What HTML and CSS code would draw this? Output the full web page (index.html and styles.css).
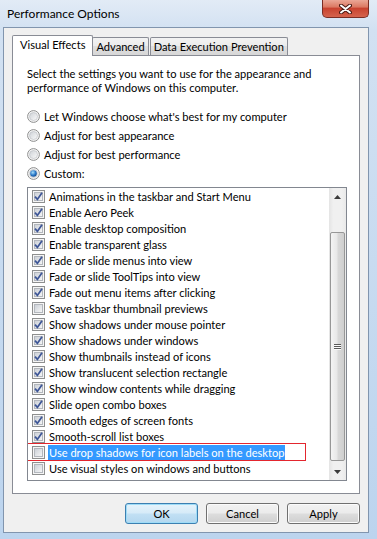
FILE: index.html
```html
<!DOCTYPE html>
<html lang="en">
<head>
<meta charset="UTF-8">
<meta name="viewport" content="width=device-width, initial-scale=1.0">
<title>Performance Options</title>
<link rel="stylesheet" href="styles.css">
</head>
<body>
<svg class="defs" width="0" height="0">
  <defs>
    <linearGradient id="boxFill" x1="0" y1="0" x2="1" y2="1">
      <stop offset="0" stop-color="#c9ced5"/>
      <stop offset="1" stop-color="#f8f8f8"/>
    </linearGradient>
    <linearGradient id="ringFill" x1="0" y1="0" x2="1" y2="1">
      <stop offset="0" stop-color="#cdd1d6"/>
      <stop offset="1" stop-color="#fbfbfb"/>
    </linearGradient>
    <radialGradient id="dotFill" cx="0.4" cy="0.35" r="0.75">
      <stop offset="0" stop-color="#a9e0fb"/>
      <stop offset="0.55" stop-color="#2a78c8"/>
      <stop offset="1" stop-color="#0e3f80"/>
    </radialGradient>
    <symbol id="box" viewBox="0 0 13 13">
      <rect x="0.5" y="0.5" width="12" height="12" fill="#f5f5f5" stroke="#8e8f8f"/>
      <rect x="2.5" y="2.5" width="8" height="8" fill="url(#boxFill)" stroke="#b3b7bd"/>
    </symbol>
    <symbol id="tick" viewBox="0 0 13 13">
      <path d="M3 6.6 L5.4 9.4 L10 2.8" fill="none" stroke="#3f5797" stroke-width="1.8"/>
    </symbol>
    <symbol id="radio" viewBox="0 0 13 13">
      <circle cx="6.5" cy="6.5" r="5.9" fill="#f5f5f5" stroke="#8e8f8f"/>
      <circle cx="6.5" cy="6.5" r="4" fill="url(#ringFill)" stroke="#b8bcc1" stroke-width="0.6"/>
    </symbol>
    <symbol id="dot" viewBox="0 0 13 13">
      <circle cx="6.5" cy="6.5" r="3.3" fill="url(#dotFill)"/>
    </symbol>
  </defs>
</svg>

<div class="window">
  <div class="titlebar">
    <span class="title">Performance Options</span>
    <div class="close">
      <svg width="13" height="10" viewBox="0 0 13 10">
        <path d="M2 1.5 L11 8.5 M11 1.5 L2 8.5" stroke="#4b1a14" stroke-width="4" stroke-linecap="round"/>
        <path d="M2 1.5 L11 8.5 M11 1.5 L2 8.5" stroke="#fff" stroke-width="2" stroke-linecap="round"/>
      </svg>
    </div>
  </div>

  <div class="frame">
    <div class="client">
      <div class="tabs">
        <div class="tab active">Visual Effects</div>
        <div class="tab">Advanced</div>
        <div class="tab tab-gap">Data Execution Prevention</div>
      </div>

      <div class="panel">
        <p class="intro">Select the settings you want to use for the appearance and performance of Windows on this computer.</p>

        <div class="choices">
          <div class="choice"><svg class="radio"><use href="#radio"/></svg><span>Let Windows choose what's best for my computer</span></div>
          <div class="choice"><svg class="radio"><use href="#radio"/></svg><span>Adjust for best appearance</span></div>
          <div class="choice"><svg class="radio"><use href="#radio"/></svg><span>Adjust for best performance</span></div>
          <div class="choice"><svg class="radio"><use href="#radio"/><use href="#dot"/></svg><span>Custom:</span></div>
        </div>

        <div class="list">
          <ul class="items">
            <li class="item"><svg class="box"><use href="#box"/><use href="#tick"/></svg><span class="label">Animations in the taskbar and Start Menu</span></li>
            <li class="item"><svg class="box"><use href="#box"/><use href="#tick"/></svg><span class="label">Enable Aero Peek</span></li>
            <li class="item"><svg class="box"><use href="#box"/><use href="#tick"/></svg><span class="label">Enable desktop composition</span></li>
            <li class="item"><svg class="box"><use href="#box"/><use href="#tick"/></svg><span class="label">Enable transparent glass</span></li>
            <li class="item"><svg class="box"><use href="#box"/><use href="#tick"/></svg><span class="label">Fade or slide menus into view</span></li>
            <li class="item"><svg class="box"><use href="#box"/><use href="#tick"/></svg><span class="label">Fade or slide ToolTips into view</span></li>
            <li class="item"><svg class="box"><use href="#box"/><use href="#tick"/></svg><span class="label">Fade out menu items after clicking</span></li>
            <li class="item"><svg class="box"><use href="#box"/></svg><span class="label">Save taskbar thumbnail previews</span></li>
            <li class="item"><svg class="box"><use href="#box"/><use href="#tick"/></svg><span class="label">Show shadows under mouse pointer</span></li>
            <li class="item"><svg class="box"><use href="#box"/><use href="#tick"/></svg><span class="label">Show shadows under windows</span></li>
            <li class="item"><svg class="box"><use href="#box"/><use href="#tick"/></svg><span class="label">Show thumbnails instead of icons</span></li>
            <li class="item"><svg class="box"><use href="#box"/><use href="#tick"/></svg><span class="label">Show translucent selection rectangle</span></li>
            <li class="item"><svg class="box"><use href="#box"/><use href="#tick"/></svg><span class="label">Show window contents while dragging</span></li>
            <li class="item"><svg class="box"><use href="#box"/><use href="#tick"/></svg><span class="label">Slide open combo boxes</span></li>
            <li class="item"><svg class="box"><use href="#box"/><use href="#tick"/></svg><span class="label">Smooth edges of screen fonts</span></li>
            <li class="item"><svg class="box"><use href="#box"/><use href="#tick"/></svg><span class="label">Smooth-scroll list boxes</span></li>
            <li class="item marked"><svg class="box"><use href="#box"/></svg><span class="label">Use drop shadows for icon labels on the desktop</span></li>
            <li class="item"><svg class="box"><use href="#box"/></svg><span class="label">Use visual styles on windows and buttons</span></li>
          </ul>

          <div class="scrollbar">
            <div class="sb-btn">
              <svg width="7" height="4" viewBox="0 0 7 4"><path d="M0 4 L3.5 0 L7 4 Z" fill="#3c3c3c"/></svg>
            </div>
            <div class="sb-track">
              <div class="thumb">
                <svg width="7" height="7" viewBox="0 0 7 7">
                  <path d="M0 1.5 H7 M0 3.5 H7 M0 5.5 H7" stroke="#5a5a5a" stroke-width="1"/>
                  <path d="M0 2.5 H7 M0 4.5 H7 M0 6.5 H7" stroke="#fafafa" stroke-width="1"/>
                </svg>
              </div>
            </div>
            <div class="sb-btn">
              <svg width="7" height="4" viewBox="0 0 7 4"><path d="M0 0 L3.5 4 L7 0 Z" fill="#3c3c3c"/></svg>
            </div>
          </div>
        </div>
      </div>

      <div class="actions">
        <button class="btn default" type="button">OK</button>
        <button class="btn" type="button">Cancel</button>
        <button class="btn" type="button">Apply</button>
      </div>
    </div>
  </div>
</div>
</body>
</html>
```

FILE: styles.css
```css
body {
  margin: 0;
  width: 377px;
  height: 539px;
  overflow: hidden;
  font-family: Lato, "Liberation Sans", sans-serif;
  font-size: 11.1px;
  color: #000;
  background: linear-gradient(to bottom, #e2ebf6 0, #d2e1f2 30px, #bcd4ee 100%);
}
.defs {
  position: absolute;
}

.window {
  display: flex;
  flex-direction: column;
  height: 100%;
}
.titlebar {
  height: 27px;
  display: flex;
  justify-content: space-between;
  align-items: flex-start;
}
.title {
  padding: 7px 0 0 7px;
  font-size: 12px;
  line-height: 14px;
}
.close {
  width: 47px;
  height: 18px;
  margin-right: 8px;
  box-sizing: border-box;
  border: 1px solid #7a2d24;
  border-top: none;
  border-radius: 0 0 5px 5px;
  background: linear-gradient(#eba796, #dc7a64 40%, #c94330 50%, #d5634d 100%);
  display: flex;
  align-items: center;
  justify-content: center;
}

.frame {
  flex: 1;
  display: flex;
  padding: 0 8px 6px 3px;
}
.client {
  flex: 1;
  border: 1px solid #8195ae;
  background: #f0f0f0;
  padding: 7px 8px 8px 8px;
  display: flex;
  flex-direction: column;
}

/* tab strip */
.tabs {
  display: flex;
  align-items: flex-end;
  height: 20px;
}
.tab {
  height: 18px;
  box-sizing: border-box;
  padding: 0 3px;
  margin-left: -1px;
  border: 1px solid #898c95;
  border-bottom: none;
  border-radius: 2px 2px 0 0;
  background: linear-gradient(#f3f3f3, #ebebeb 50%, #dfdfdf 50%, #d7d7d7);
  line-height: 17px;
  white-space: nowrap;
}
.tab.active {
  height: 21px;
  margin: 0 0 -1px 0;
  padding: 0 7px;
  background: #fff;
  line-height: 18px;
  position: relative;
  z-index: 1;
}
.tab-gap {
  margin-left: 1px;
}

.panel {
  background: #fff;
  border: 1px solid #898c95;
  padding: 11px 12px 12px 14px;
}
.intro {
  margin: 0;
  line-height: 14px;
}
.choices {
  margin-top: 12px;
}
.choice {
  display: flex;
  align-items: center;
  gap: 4px;
  height: 19px;
}
.radio {
  width: 13px;
  height: 13px;
  flex: none;
}

/* list with checkboxes */
.list {
  margin-top: 4px;
  height: 294px;
  box-sizing: border-box;
  border: 1px solid #828790;
  display: flex;
}
.items {
  flex: 1;
  margin: 0;
  padding: 0 0 0 4px;
  list-style: none;
  overflow: hidden;
}
.item {
  height: 16px;
  display: flex;
  align-items: center;
  gap: 4px;
  white-space: nowrap;
}
.box {
  width: 13px;
  height: 13px;
  flex: none;
}
.item.marked {
  width: 277px;
  box-sizing: border-box;
  margin-left: -4px;
  padding-left: 4px;
  outline: 1px solid #e3262e;
}
.item.marked .label {
  background: #3399ff;
  color: #fff;
  padding: 1px;
  line-height: 13px;
  margin-left: -1px;
}

.scrollbar {
  width: 17px;
  flex: none;
  display: flex;
  flex-direction: column;
  background: linear-gradient(to right, #e4e4e4, #f0f0f0 25%, #f0f0f0 75%, #e9e9e9);
}
.sb-btn {
  height: 17px;
  display: flex;
  align-items: center;
  justify-content: center;
}
.sb-track {
  flex: 1;
  display: flex;
  padding: 27px 0 2px;
}
.thumb {
  flex: 1;
  margin: 0 1px;
  border: 1px solid #979797;
  border-radius: 2px;
  background: linear-gradient(to right, #f4f4f4, #e8e8e8 45%, #d8d8d8 55%, #cfcfcf);
  display: flex;
  align-items: center;
  justify-content: center;
}

.actions {
  margin-top: 9px;
  display: flex;
  justify-content: flex-end;
  gap: 8px;
}
.btn {
  width: 73px;
  height: 21px;
  padding: 0;
  font: inherit;
  color: #000;
  border: 1px solid #707070;
  border-radius: 3px;
  background: linear-gradient(#f2f2f2, #ebebeb 48%, #dddddd 52%, #cfcfcf);
  box-shadow: inset 0 0 0 1px #fbfbfb;
}
.btn.default {
  border-color: #3c7fb1;
  background: linear-gradient(#e6f3fb, #d6ebf8 48%, #c2e0f4 52%, #b3d7ef);
  box-shadow: inset 0 0 0 1px #9fdcf7;
}
```
